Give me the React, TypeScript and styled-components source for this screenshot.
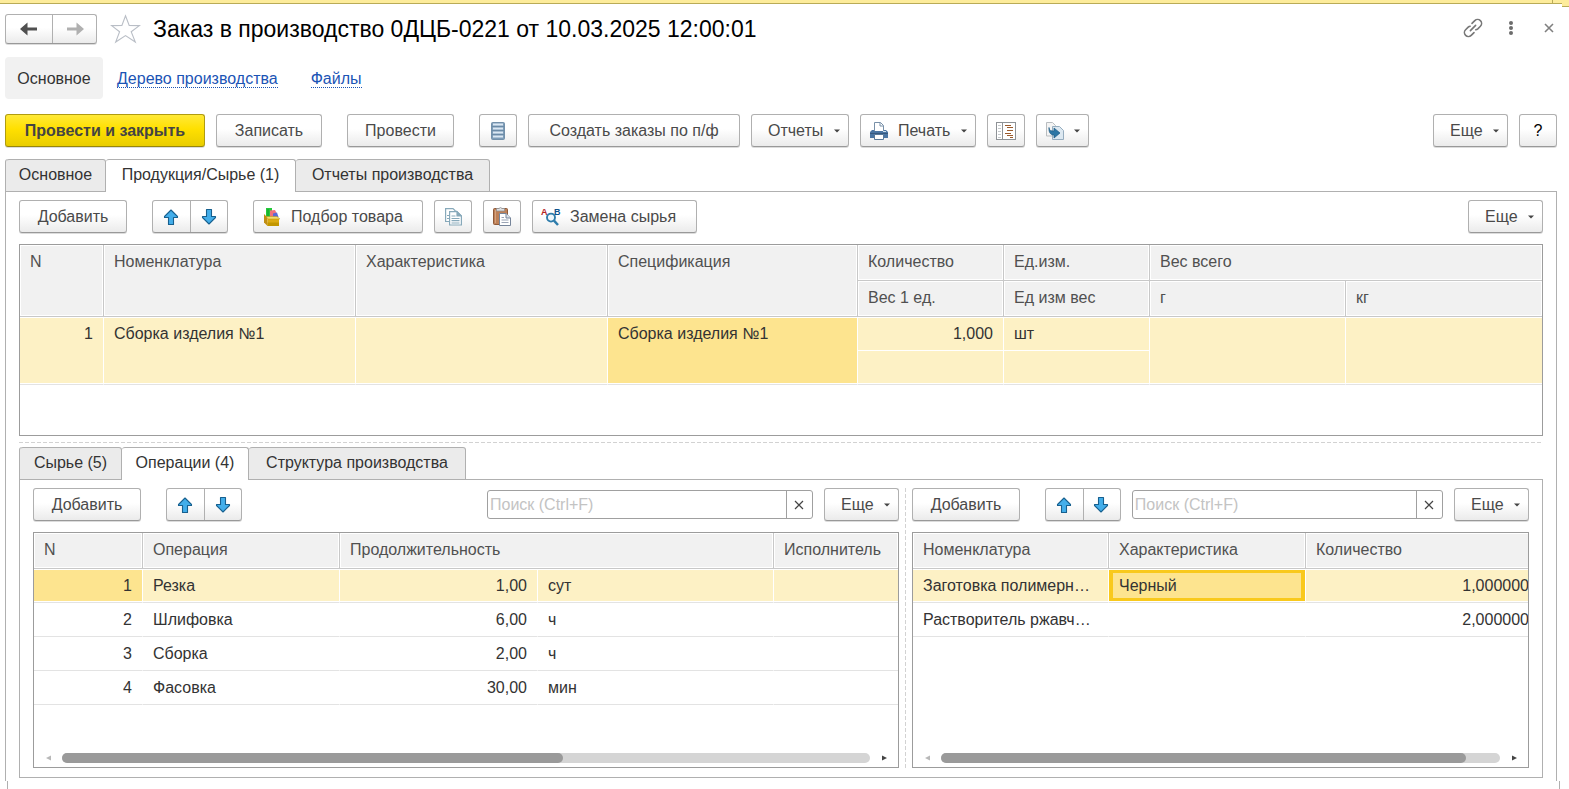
import React from "react";
import styled, { createGlobalStyle, css } from "styled-components";

const GlobalStyle = createGlobalStyle`
  *, *::before, *::after { box-sizing: border-box; }
  body { margin: 0; background: #fff; }
  body, button, input, table {
    font-family: "Liberation Sans", Arial, sans-serif;
    font-size: 16px;
    line-height: 20px;
    color: #333;
  }
`;

const Page = styled.div`
  display: flex;
  flex-direction: column;
  min-height: 100vh;
`;

/* ---------- window frame ---------- */

const TopBand = styled.div`
  display: flex;
  align-items: flex-start;
  height: 7px;
`;

const BandMain = styled.div`
  flex: 1;
  height: 4px;
  background: #fdec9b;
  border-bottom: 1px solid #b9ab57;
`;

const BandTail = styled(BandMain)`
  flex: 0 0 10px;
  border-left: 1px solid #b9ab57;
`;

const BandCorner = styled(BandMain)`
  flex: 0 0 7px;
  height: 7px;
`;

const BottomEdge = styled.div`
  height: 8px;
  margin: 0 9px 0 7px;
  border: solid #b0b0b0;
  border-width: 0 1px;
`;

const Content = styled.main`
  flex: 1;
  display: flex;
  flex-direction: column;
  padding: 7px 12px 0 5px;
`;

const TitleBar = styled.header`
  display: flex;
  align-items: center;
  height: 30px;
`;

const Title = styled.h1`
  flex: 1;
  margin: 0 0 0 12px;
  font-size: 23px;
  line-height: 28px;
  font-weight: 400;
  color: #000;
`;

const PlainButton = styled.button`
  display: inline-flex;
  align-items: center;
  justify-content: center;
  padding: 0;
  border: 0;
  background: none;
  cursor: pointer;
`;

const WindowTools = styled.div`
  display: flex;
  align-items: center;
  gap: 16px;
  margin: 0 -3px 2px 0;
`;

const ToolIcon = styled(PlainButton)`
  width: 22px;
  height: 24px;
`;

const StarButton = styled(PlainButton)`
  margin-left: 13px;
  width: 31px;
  height: 30px;
`;

const SectionNav = styled.nav`
  display: flex;
  align-items: center;
  gap: 14px;
  margin-top: 13px;
`;

const CurrentSection = styled.span`
  display: flex;
  align-items: center;
  justify-content: center;
  width: 98px;
  height: 42px;
  padding-top: 2px;
  border-radius: 4px;
  background: #f1f1f1;
`;

const SectionLink = styled.a`
  padding-top: 2px;
  line-height: 16px;
  color: #1b54b5;
  text-decoration: none;
  border-bottom: 1px dotted #1b54b5;
  & + & {
    margin-left: 19px;
  }
`;

/* ---------- buttons ---------- */

const raised = css`
  border: 1px solid #b0b0b0;
  border-bottom-color: #999;
  border-radius: 3px;
  background: linear-gradient(#fff 0%, #fff 45%, #ebebeb 100%);
  box-shadow: 0 1px 0 #dcdcdc;
`;

const Bar = styled.div<{ $top?: number }>`
  display: flex;
  align-items: flex-start;
  gap: 11px;
  height: 33px;
  margin-top: ${(p) => p.$top ?? 8}px;
`;

const Spacer = styled.span`
  flex: 1;
`;

const Gap = styled.span`
  width: 3px;
`;

const Button = styled.button<{ $w: number; $kind?: "menu" | "icon" }>`
  ${raised}
  flex: none;
  display: flex;
  align-items: center;
  justify-content: ${(p) => (p.$kind === "menu" ? "space-between" : p.$kind === "icon" ? "flex-start" : "center")};
  gap: 10px;
  width: ${(p) => p.$w}px;
  height: 33px;
  padding: ${(p) => (p.$kind === "menu" ? "0 8px 0 16px" : p.$kind === "icon" ? "0 8px 0 9px" : "0")};
  color: #4a4a4a;
  white-space: nowrap;
  cursor: pointer;
`;

const PrimaryButton = styled(Button)`
  font-weight: 700;
  color: #444;
  border-color: #b09c10;
  border-bottom-color: #97860a;
  background: linear-gradient(#ffe938 0%, #ffe000 45%, #e9cd00 100%);
`;

const HelpButton = styled(Button)`
  color: #000;
`;

const ButtonPair = styled.div<{ $h?: number }>`
  ${raised}
  flex: none;
  display: flex;
  height: ${(p) => p.$h ?? 33}px;
`;

const PairButton = styled(PlainButton)<{ $w: number }>`
  width: ${(p) => p.$w}px;
  padding-right: 1px;
  & + & {
    border-left: 1px solid #b0b0b0;
  }
`;

const HistoryButton = styled(PairButton)`
  padding: 0;
`;

const CaretEnd = styled.span`
  display: flex;
  margin-left: auto;
`;

/* ---------- tabs ---------- */

const TabRow = styled.div<{ $top: number }>`
  display: flex;
  height: 33px;
  margin-top: ${(p) => p.$top}px;
  border-left: 1px solid #b0b0b0;
  border-top-left-radius: 3px;
  &::after {
    content: "";
    flex: 1;
    border-bottom: 1px solid #b0b0b0;
  }
`;

const Tab = styled.button<{ $active?: boolean; $w: number }>`
  width: ${(p) => p.$w}px;
  padding: 0 0 2px;
  border: solid #b0b0b0;
  border-width: 1px 1px ${(p) => (p.$active ? 0 : 1)}px 0;
  border-radius: 3px 3px 0 0;
  background: ${(p) => (p.$active ? "#fff" : "#ebebeb")};
  white-space: nowrap;
  cursor: pointer;
`;

const Panel = styled.section`
  flex: 1;
  display: flex;
  flex-direction: column;
  padding: 0 13px 3px;
  border: solid #b0b0b0;
  border-width: 0 1px;
`;

const InnerPanel = styled.section`
  flex: 1;
  display: grid;
  grid-template-columns: minmax(0, 866fr) 1px minmax(0, 617fr);
  gap: 6px;
  padding: 8px 13px 9px;
  border: solid #b0b0b0;
  border-width: 0 1px 1px;
`;

const Pane = styled.div`
  display: flex;
  flex-direction: column;
  min-width: 0;
`;

const HorizontalSplit = styled.div`
  height: 1px;
  margin-top: 6px;
  background: repeating-linear-gradient(90deg, #d2d2d2 0 4px, #fff 4px 6px);
`;

const VerticalSplit = styled.div`
  background: repeating-linear-gradient(#d2d2d2 0 4px, #fff 4px 6px);
`;

/* ---------- search ---------- */

const SearchBox = styled.div`
  flex: 0 1 326px;
  display: flex;
  min-width: 0;
  height: 29px;
  margin-top: 2px;
  border: 1px solid #a0a0a0;
  border-radius: 3px;
`;

const SearchInput = styled.input`
  flex: 1;
  min-width: 0;
  padding: 0 2px;
  border: 0;
  outline: 0;
  background: none;
  &::placeholder {
    color: #c3c3c3;
    opacity: 1;
  }
`;

const ClearButton = styled(PlainButton)`
  width: 26px;
  padding-right: 1px;
  border-left: 1px solid #a0a0a0;
`;

/* ---------- tables ---------- */

const TableFrame = styled.div<{ $fill?: boolean }>`
  display: flex;
  flex-direction: column;
  ${(p) => (p.$fill ? "flex: 1;" : "height: 192px;")}
  margin-top: 11px;
  border: 1px solid #9c9c9c;
  overflow: hidden;
`;

const Clip = styled.div`
  flex: 1;
  overflow: hidden;
`;

const Table = styled.table<{ $min?: number }>`
  width: 100%;
  min-width: ${(p) => p.$min ?? 0}px;
  table-layout: fixed;
  border-collapse: separate;
  border-spacing: 0;
`;

const Th = styled.th`
  height: 36px;
  padding: 7px 9px 7px 10px;
  border: solid #c8c8c8;
  border-width: 0 1px 1px 0;
  background: #f1f1f1;
  box-shadow: inset 0 0 0 1px #fff;
  font-weight: 400;
  text-align: left;
  vertical-align: top;
  color: #505050;
  white-space: nowrap;
  &[data-edge] {
    border-right-width: 0;
  }
`;

const Td = styled.td<{ $on?: boolean; $sel?: boolean; $focus?: boolean; $num?: boolean; $half?: "upper" | "lower" }>`
  height: 34px;
  padding: 7px 10px 6px;
  border: solid #fff;
  border-width: 0 1px 1px 0;
  border-bottom-color: ${(p) => (p.$half === "upper" ? "#fff" : "#e3e3e3")};
  background: ${(p) => (p.$sel ? "#fde48f" : p.$on ? "#fdf1c5" : "#fff")};
  background-clip: padding-box;
  box-shadow: ${(p) =>
    p.$focus
      ? "inset 0 1px 0 #fff, inset 0 -1px 0 #fff, inset 0 0 0 4px #f9c91c"
      : p.$half === "upper"
        ? "inset 0 1px 0 #fff"
        : p.$half === "lower"
          ? "inset 0 -1px 0 #fff"
          : "inset 0 1px 0 #fff, inset 0 -1px 0 #fff"};
  text-align: ${(p) => (p.$num ? "right" : "left")};
  vertical-align: top;
  white-space: nowrap;
  overflow: hidden;
  text-overflow: ellipsis;
  &[data-edge] {
    border-right-width: 0;
  }
`;

const ScrollRow = styled.div`
  display: flex;
  align-items: center;
  height: 10px;
  margin-bottom: 4px;
`;

const ScrollArrow = styled(PlainButton)`
  width: 28px;
  height: 10px;
`;

const Track = styled.div`
  flex: 1;
  height: 10px;
  border-radius: 5px;
  background: #d5d5d5;
`;

const Thumb = styled.div<{ $share: number }>`
  width: ${(p) => p.$share}%;
  height: 10px;
  border-radius: 5px;
  background: #9a9a9a;
`;

/* ---------- icons ---------- */

const Caret = () => (
  <CaretEnd>
    <svg width="6" height="4" viewBox="0 0 6 4" aria-hidden="true">
      <path d="M0 0.5h6L3 3.5z" fill="#444" />
    </svg>
  </CaretEnd>
);

const NavArrow = ({ back }: { back?: boolean }) => (
  <svg width="18" height="14" viewBox="0 0 18 14" aria-hidden="true">
    {back ? (
      <path d="M0 7L7.5 0.5V5.5H17V8.5H7.5V13.5z" fill="#505050" />
    ) : (
      <path d="M18 7L10.5 0.5V5.5H1V8.5H10.5V13.5z" fill="#b0b0b0" />
    )}
  </svg>
);

const Star = () => (
  <svg width="31" height="30" viewBox="0 0 31 30" aria-hidden="true">
    <path
      d="M15.5 1.8L19.2 11.4L29.4 11.6L21.2 17.8L25.3 28L15.5 21.6L5.7 28L9.6 17.8L1.6 11.6L11.9 11.4z"
      fill="none"
      stroke="#b9bec6"
      strokeWidth="1.1"
    />
  </svg>
);

const LinkIcon = () => (
  <svg width="20" height="20" viewBox="0 0 20 20" fill="none" stroke="#777" strokeWidth="1.6" strokeLinecap="round" aria-hidden="true">
    <path d="M9 5.4L11.8 2.6a3.9 3.9 0 0 1 5.6 5.6L14.8 10.8q-1 0.9-2 1" />
    <path d="M11 14.6L8.2 17.4a3.9 3.9 0 0 1-5.6-5.6L5.2 9.2q1-0.9 2-1" />
    <path d="M7.4 12.6L12.6 7.4" />
  </svg>
);

const DotsIcon = () => (
  <svg width="6" height="16" viewBox="0 0 6 16" fill="#6c6c6c" aria-hidden="true">
    <circle cx="3" cy="3" r="2" />
    <circle cx="3" cy="8" r="2" />
    <circle cx="3" cy="13" r="2" />
  </svg>
);

const Cross = ({ color, width }: { color: string; width: number }) => (
  <svg width="10" height="10" viewBox="0 0 10 10" stroke={color} strokeWidth={width} aria-hidden="true">
    <path d="M1 1L9 9M9 1L1 9" />
  </svg>
);

const MoveArrow = ({ down }: { down?: boolean }) => (
  <svg width="16" height="18" viewBox="0 0 16 18" aria-hidden="true">
    <path
      d={down ? "M5.5 1.5h5v7h4v1L8 16L1.5 9.5v-1h4z" : "M5.5 16.5h5v-7h4v-1L8 2L1.5 8.5v1h4z"}
      fill="#43aeea"
      stroke="#17608f"
      strokeWidth="1.1"
      strokeLinejoin="round"
    />
  </svg>
);

const StackIcon = () => (
  <svg width="14" height="18" viewBox="0 0 14 18" aria-hidden="true">
    <rect x="0.5" y="0.5" width="13" height="17" rx="1" fill="#7e9db8" stroke="#7390aa" />
    <path d="M2 2.5h10M2 6.5h10M2 10.5h10M2 14.5h10" stroke="#dbe8f3" strokeWidth="1.8" />
    <path d="M1 4.6h12M1 8.6h12M1 12.6h12" stroke="#6584a0" strokeWidth="0.8" />
  </svg>
);

const PrinterIcon = () => (
  <svg width="18" height="18" viewBox="0 0 18 18" aria-hidden="true">
    <path d="M4.5 9V0.5H10.5L13.5 3.5V9" fill="#fff" stroke="#7890a8" />
    <path d="M10 0.5V4h3.5" fill="none" stroke="#7890a8" />
    <path d="M2 8H4V9H14V8H16L18 10V16H0V10z" fill="#4a75a3" />
    <path d="M0 11.5H18" stroke="#36597f" />
    <rect x="13" y="9" width="3" height="1" fill="#cfe0ee" />
    <path d="M4.5 12.5H13.5V17.5H4.5z" fill="#fff" stroke="#58799a" />
  </svg>
);

const ListIcon = () => (
  <svg width="20" height="18" viewBox="0 0 20 18" aria-hidden="true">
    <rect x="0.5" y="0.5" width="19" height="17" fill="#fff" stroke="#8e9296" />
    <path d="M6.5 1V17" stroke="#8e9296" />
    <path d="M2 3.5h3M2 6.5h3M2 9.5h3M2 12.5h3M2 15.5h3" stroke="#c5c9cc" />
    <path d="M9 3.5h6M11 5.5h6M11 8.5h6M9 11.5h6M11 13.5h6M14 15.5h3" stroke="#9a5a2c" strokeWidth="1.2" />
  </svg>
);

const BasedOnIcon = () => (
  <svg width="18" height="18" viewBox="0 0 18 18" aria-hidden="true">
    <path d="M0.5 0.5H6.5L9.5 3.5V14H0.5z" fill="#f4f4f4" stroke="#b9bdc0" />
    <path d="M6.5 4.5H13.5L17.5 8.5V17.5H6.5z" fill="#dce8f1" stroke="#96adbf" />
    <path d="M3 5.5C3.2 8.6 5 9 8 9V6L14 11L8 16V13C4.5 13 2.6 10.4 3 5.5z" fill="#2c76a5" stroke="#205b84" strokeWidth="0.7" />
  </svg>
);

const BoxIcon = () => (
  <svg width="18" height="18" viewBox="0 0 18 18" aria-hidden="true">
    <path d="M3 0H9V9H3z" fill="#25c93a" />
    <path d="M5 1V8" stroke="#0c9c2b" />
    <path d="M7 2.5L12 2L14 6V10H7z" fill="#f0707c" />
    <path d="M10 5.5L14 4.5L15.5 9L10 10z" fill="#5868d8" />
    <path d="M1 6L4.5 9.5V18L1 14.5z" fill="#c08e14" />
    <path d="M4.5 10.5H16V18H4.5z" fill="#dcab12" />
    <path d="M3 8.5H14L17 11H5z" fill="#f2dc6c" stroke="#b9930f" strokeWidth="0.5" />
    <path d="M4.5 14.5H16V18H4.5z" fill="#c29600" />
  </svg>
);

const CopyIcon = () => (
  <svg width="17" height="18" viewBox="0 0 17 18" fill="none" stroke="#87a9ba" strokeWidth="1.2" aria-hidden="true">
    <path d="M4 13.5H0.6V0.6H8L10.5 3" fill="#fff" />
    <path d="M2 7.5h2M2 10.5h2" />
    <path d="M4.6 3.6H12L16.4 8V17H4.6z" fill="#fff" />
    <path d="M12 3.6V8H16.4z" fill="#87a9ba" />
    <path d="M6.5 8h4M6.5 10.5h8M6.5 12.7h8M6.5 15h8" />
  </svg>
);

const PasteIcon = () => (
  <svg width="18" height="19" viewBox="0 0 18 19" aria-hidden="true">
    <rect x="0.5" y="1.5" width="14" height="16" rx="1" fill="#bd8057" stroke="#8e5938" />
    <path d="M2.5 3V16" stroke="#d4a27e" />
    <path d="M3.5 1.5H6Q7.5-0.6 9 1.5H11.5V4H3.5z" fill="#dfe0e2" stroke="#8f9296" strokeWidth="0.8" />
    <path d="M6.5 6.5H13L17.5 11V18.5H6.5z" fill="#fff" stroke="#76859a" />
    <path d="M13 6.5V11H17.5" fill="#dbe2ea" stroke="#76859a" />
    <path d="M8.5 10.5h2.5M8.5 13h7M8.5 15.5h7" stroke="#9aa4b5" />
  </svg>
);

const ReplaceIcon = () => (
  <svg width="18" height="18" viewBox="0 0 18 18" overflow="visible" aria-hidden="true">
    <text x="-1" y="7" fontFamily="Liberation Sans" fontSize="9" fontWeight="700" fill="#b5231f">A</text>
    <text x="12" y="7" fontFamily="Liberation Sans" fontSize="9" fontWeight="700" fill="#0f528c">B</text>
    <circle cx="9" cy="9.6" r="4" fill="#eef6fb" stroke="#2e7cab" strokeWidth="1.9" />
    <path d="M12 12.6L16 17" stroke="#2e7cab" strokeWidth="2.4" />
  </svg>
);

/* ---------- composed parts ---------- */

/* Takes the free space before the search box without adding a second gap. */
const Filler = styled.span`
  flex: 1 0 0;
  margin-right: -11px;
`;

const MovePair = () => (
  <ButtonPair>
    <PairButton $w={37} aria-label="Переместить вверх"><MoveArrow /></PairButton>
    <PairButton $w={37} aria-label="Переместить вниз"><MoveArrow down /></PairButton>
  </ButtonPair>
);

const MoreButton = () => (
  <Button $w={75} $kind="menu">Еще<Caret /></Button>
);

const ListToolbar = () => (
  <Bar $top={0}>
    <Button $w={108}>Добавить</Button>
    <Gap />
    <MovePair />
    <Filler />
    <SearchBox>
      <SearchInput placeholder="Поиск (Ctrl+F)" aria-label="Поиск" />
      <ClearButton aria-label="Очистить"><Cross color="#444" width={1.2} /></ClearButton>
    </SearchBox>
    <MoreButton />
  </Bar>
);

const Scrollbar = ({ share }: { share: number }) => (
  <ScrollRow>
    <ScrollArrow aria-label="Влево">
      <svg width="5" height="6" viewBox="0 0 5 6" aria-hidden="true"><path d="M5 0.5V5.5L0 3z" fill="#b8b8b8" /></svg>
    </ScrollArrow>
    <Track><Thumb $share={share} /></Track>
    <ScrollArrow aria-label="Вправо">
      <svg width="5" height="6" viewBox="0 0 5 6" aria-hidden="true"><path d="M0 0.5V5.5L5 3z" fill="#444" /></svg>
    </ScrollArrow>
  </ScrollRow>
);

const Columns = ({ widths }: { widths: (number | undefined)[] }) => (
  <colgroup>
    {widths.map((w, i) => <col key={i} width={w} />)}
  </colgroup>
);

const operations = [
  ["1", "Резка", "1,00", "сут"],
  ["2", "Шлифовка", "6,00", "ч"],
  ["3", "Сборка", "2,00", "ч"],
  ["4", "Фасовка", "30,00", "мин"],
];

const ProductsTable = () => (
  <TableFrame>
    <Table>
      <Columns widths={[84, 252, 252, 250, 146, 146, 196, 196]} />
      <thead>
        <tr>
          <Th rowSpan={2}>N</Th>
          <Th rowSpan={2}>Номенклатура</Th>
          <Th rowSpan={2}>Характеристика</Th>
          <Th rowSpan={2}>Спецификация</Th>
          <Th>Количество</Th>
          <Th>Ед.изм.</Th>
          <Th colSpan={2} data-edge="">Вес всего</Th>
        </tr>
        <tr>
          <Th>Вес 1 ед.</Th>
          <Th>Ед изм вес</Th>
          <Th>г</Th>
          <Th data-edge="">кг</Th>
        </tr>
      </thead>
      <tbody>
        <tr>
          <Td rowSpan={2} $on $num>1</Td>
          <Td rowSpan={2} $on>Сборка изделия №1</Td>
          <Td rowSpan={2} $on />
          <Td rowSpan={2} $sel>Сборка изделия №1</Td>
          <Td $on $num $half="upper">1,000</Td>
          <Td $on $half="upper">шт</Td>
          <Td rowSpan={2} $on />
          <Td rowSpan={2} $on data-edge="" />
        </tr>
        <tr>
          <Td $on $half="lower" />
          <Td $on $half="lower" />
        </tr>
      </tbody>
    </Table>
  </TableFrame>
);

const OperationsTable = () => (
  <TableFrame $fill>
    <Clip>
      <Table>
        <Columns widths={[109, 197, 198, 236, undefined]} />
        <thead>
          <tr>
            <Th>N</Th>
            <Th>Операция</Th>
            <Th colSpan={2}>Продолжительность</Th>
            <Th data-edge="">Исполнитель</Th>
          </tr>
        </thead>
        <tbody>
          {operations.map(([n, name, amount, unit], i) => (
            <tr key={n}>
              <Td $num $sel={i === 0}>{n}</Td>
              <Td $on={i === 0}>{name}</Td>
              <Td $num $on={i === 0}>{amount}</Td>
              <Td $on={i === 0}>{unit}</Td>
              <Td $on={i === 0} data-edge="" />
            </tr>
          ))}
        </tbody>
      </Table>
    </Clip>
    <Scrollbar share={62} />
  </TableFrame>
);

const MaterialsTable = () => (
  <TableFrame $fill>
    <Clip>
      <Table $min={626}>
        <Columns widths={[196, 197, 233]} />
        <thead>
          <tr>
            <Th>Номенклатура</Th>
            <Th>Характеристика</Th>
            <Th data-edge="">Количество</Th>
          </tr>
        </thead>
        <tbody>
          <tr>
            <Td $on>Заготовка полимерн…</Td>
            <Td $sel $focus>Черный</Td>
            <Td $on $num data-edge="">1,000000</Td>
          </tr>
          <tr>
            <Td>Растворитель ржавч…</Td>
            <Td />
            <Td $num data-edge="">2,000000</Td>
          </tr>
        </tbody>
      </Table>
    </Clip>
    <Scrollbar share={94} />
  </TableFrame>
);

export default function App() {
  return (
    <Page>
      <GlobalStyle />
      <TopBand><BandMain /><BandTail /><BandCorner /></TopBand>
      <Content>
        <TitleBar>
          <ButtonPair $h={30}>
            <HistoryButton $w={46} aria-label="Назад"><NavArrow back /></HistoryButton>
            <HistoryButton $w={44} aria-label="Вперед"><NavArrow /></HistoryButton>
          </ButtonPair>
          <StarButton aria-label="В избранное"><Star /></StarButton>
          <Title>Заказ в производство 0ДЦБ-0221 от 10.03.2025 12:00:01</Title>
          <WindowTools>
            <ToolIcon aria-label="Получить ссылку"><LinkIcon /></ToolIcon>
            <ToolIcon aria-label="Меню"><DotsIcon /></ToolIcon>
            <ToolIcon aria-label="Закрыть"><Cross color="#808080" width={1.6} /></ToolIcon>
          </WindowTools>
        </TitleBar>

        <SectionNav>
          <CurrentSection>Основное</CurrentSection>
          <SectionLink href="#tree">Дерево производства</SectionLink>
          <SectionLink href="#files">Файлы</SectionLink>
        </SectionNav>

        <Bar $top={15}>
          <PrimaryButton $w={200}>Провести и закрыть</PrimaryButton>
          <Button $w={106}>Записать</Button>
          <Gap />
          <Button $w={107}>Провести</Button>
          <Gap />
          <Button $w={38} aria-label="Движения документа"><StackIcon /></Button>
          <Button $w={212}>Создать заказы по п/ф</Button>
          <Button $w={98} $kind="menu">Отчеты<Caret /></Button>
          <Button $w={116} $kind="icon"><PrinterIcon />Печать<Caret /></Button>
          <Button $w={38} aria-label="Список"><ListIcon /></Button>
          <Button $w={53} $kind="icon" aria-label="Создать на основании"><BasedOnIcon /><Caret /></Button>
          <Spacer />
          <MoreButton />
          <HelpButton $w={38} aria-label="Справка">?</HelpButton>
        </Bar>

        <TabRow $top={12} role="tablist">
          <Tab $w={100} role="tab">Основное</Tab>
          <Tab $w={190} role="tab" $active aria-selected="true">Продукция/Сырье (1)</Tab>
          <Tab $w={194} role="tab">Отчеты производства</Tab>
        </TabRow>
        <Panel>
          <Bar>
            <Button $w={108}>Добавить</Button>
            <Gap />
            <MovePair />
            <Gap />
            <Button $w={170} $kind="icon"><BoxIcon />Подбор товара</Button>
            <Button $w={38} aria-label="Копировать"><CopyIcon /></Button>
            <Button $w={38} aria-label="Вставить"><PasteIcon /></Button>
            <Button $w={165} $kind="icon"><ReplaceIcon />Замена сырья</Button>
            <Spacer />
            <MoreButton />
          </Bar>
          <ProductsTable />
          <HorizontalSplit />
          <TabRow $top={4} role="tablist">
            <Tab $w={102} role="tab">Сырье (5)</Tab>
            <Tab $w={127} role="tab" $active aria-selected="true">Операции (4)</Tab>
            <Tab $w={217} role="tab">Структура производства</Tab>
          </TabRow>
          <InnerPanel>
            <Pane>
              <ListToolbar />
              <OperationsTable />
            </Pane>
            <VerticalSplit />
            <Pane>
              <ListToolbar />
              <MaterialsTable />
            </Pane>
          </InnerPanel>
        </Panel>
      </Content>
      <BottomEdge />
    </Page>
  );
}
